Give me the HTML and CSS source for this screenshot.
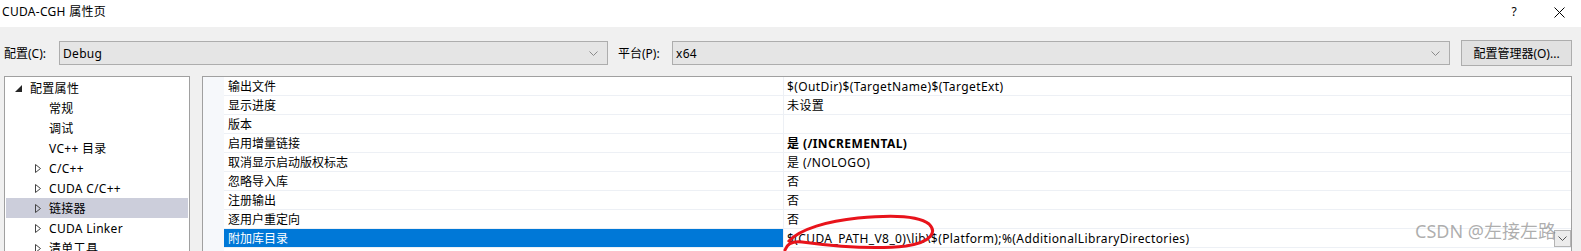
FILE: index.html
```html
<!DOCTYPE html>
<html>
<head>
    <title>CUDA-CGH 属性页</title>
    <link rel="stylesheet" href="styles.css">
</head>
<body>
    <div class="titlebar">
        <span class="title">CUDA-CGH 属性页</span>
        <span class="title-help">?</span>
        <svg class="title-close" width="11" height="11" viewBox="0 0 11 11">
            <path d="M0.5 0.5 L10.5 10.5 M10.5 0.5 L0.5 10.5" stroke="#000" stroke-width="1" fill="none"/>
        </svg>
    </div>

    <div class="toolbar">
        <span class="field-label">配置(C):</span>
        <div class="combo combo-config">
            <span>Debug</span>
            <svg class="chevron" width="9" height="5" viewBox="0 0 9 5"><path d="M0.5 0.5 L4.5 4.5 L8.5 0.5" stroke="#8a8a8a" fill="none"/></svg>
        </div>
        <span class="field-label platform-label">平台(P):</span>
        <div class="combo combo-platform">
            <span>x64</span>
            <svg class="chevron" width="9" height="5" viewBox="0 0 9 5"><path d="M0.5 0.5 L4.5 4.5 L8.5 0.5" stroke="#8a8a8a" fill="none"/></svg>
        </div>
        <button class="btn">配置管理器(O)...</button>
    </div>

    <div class="main">
        <div class="tree">
            <div class="tree-row level0">
                <span class="twisty"><svg width="7" height="7" viewBox="0 0 7 7"><path d="M7 0 L7 7 L0 7 Z" fill="#262626"/></svg></span>
                <span>配置属性</span>
            </div>
            <div class="tree-row leaf">常规</div>
            <div class="tree-row leaf">调试</div>
            <div class="tree-row leaf">VC++ 目录</div>
            <div class="tree-row level1">
                <span class="twisty"><svg width="6" height="9" viewBox="0 0 6 9"><path d="M0.5 0.5 L5.5 4.5 L0.5 8.5 Z" stroke="#444" fill="none"/></svg></span>
                <span>C/C++</span>
            </div>
            <div class="tree-row level1">
                <span class="twisty"><svg width="6" height="9" viewBox="0 0 6 9"><path d="M0.5 0.5 L5.5 4.5 L0.5 8.5 Z" stroke="#444" fill="none"/></svg></span>
                <span>CUDA C/C++</span>
            </div>
            <div class="tree-row level1 selected">
                <span class="twisty"><svg width="6" height="9" viewBox="0 0 6 9"><path d="M0.5 0.5 L5.5 4.5 L0.5 8.5 Z" stroke="#444" fill="none"/></svg></span>
                <span>链接器</span>
            </div>
            <div class="tree-row level1">
                <span class="twisty"><svg width="6" height="9" viewBox="0 0 6 9"><path d="M0.5 0.5 L5.5 4.5 L0.5 8.5 Z" stroke="#444" fill="none"/></svg></span>
                <span>CUDA Linker</span>
            </div>
            <div class="tree-row level1">
                <span class="twisty"><svg width="6" height="9" viewBox="0 0 6 9"><path d="M0.5 0.5 L5.5 4.5 L0.5 8.5 Z" stroke="#444" fill="none"/></svg></span>
                <span>清单工具</span>
            </div>
        </div>

        <div class="grid">
            <div class="gutter"></div>
            <div class="rows">
                <div class="prop-row"><div class="prop-name">输出文件</div><div class="prop-value">$(OutDir)$(TargetName)$(TargetExt)</div></div>
                <div class="prop-row"><div class="prop-name">显示进度</div><div class="prop-value">未设置</div></div>
                <div class="prop-row"><div class="prop-name">版本</div><div class="prop-value"></div></div>
                <div class="prop-row"><div class="prop-name">启用增量链接</div><div class="prop-value bold">是 (/INCREMENTAL)</div></div>
                <div class="prop-row"><div class="prop-name">取消显示启动版权标志</div><div class="prop-value">是 (/NOLOGO)</div></div>
                <div class="prop-row"><div class="prop-name">忽略导入库</div><div class="prop-value">否</div></div>
                <div class="prop-row"><div class="prop-name">注册输出</div><div class="prop-value">否</div></div>
                <div class="prop-row"><div class="prop-name">逐用户重定向</div><div class="prop-value">否</div></div>
                <div class="prop-row selected">
                    <div class="prop-name">附加库目录</div>
                    <div class="prop-value">
                        <span>$(CUDA_PATH_V8_0)\lib\$(Platform);%(AdditionalLibraryDirectories)</span>
                        <span class="drop-btn"><svg width="9" height="5" viewBox="0 0 9 5"><path d="M0.5 0.5 L4.5 4.5 L8.5 0.5" stroke="#555" fill="none"/></svg></span>
                    </div>
                </div>
                <div class="prop-row"><div class="prop-name"></div><div class="prop-value"></div></div>
            </div>
        </div>
    </div>

    <!-- hand-drawn red mark from the screenshot -->
    <svg class="scribble" width="1581" height="251" viewBox="0 0 1581 251">
        <path d="M789 241 C800 229 828 221 858 218 C888 215 918 215 929 224 C937 232 932 242 906 246 C872 250 832 246 802 242 C793 241 787 244 785 250" stroke="#e8131b" stroke-width="3" fill="none" stroke-linecap="round"/>
    </svg>

    <div class="watermark">CSDN @左接左路</div>
</body>
</html>
```

FILE: styles.css
```css
body {
    margin: 0;
    width: 1581px;
    height: 251px;
    overflow: hidden;
    position: relative;
    background-color: #f0f0f0;
    font-family: "Segoe UI", "Noto Sans", "Noto Sans CJK SC", sans-serif;
    font-size: 12px;
    color: #000;
}
.titlebar {
    height: 27px;
    background-color: #fff;
    display: flex;
    align-items: flex-start;
    padding: 3px 0 0 2px;
    box-sizing: border-box;
    line-height: 18px;
    letter-spacing: 0.3px;
}
.title {
    flex: 1;
}
.title-help {
    margin-right: 37px;
}
.title-close {
    margin-top: 4px;
    margin-right: 16px;
}
.toolbar {
    display: flex;
    align-items: center;
    height: 26px;
    margin-top: 13px;
    padding: 0 9px 0 4px;
}
.field-label {
    width: 55px;
}
.platform-label {
    width: 54px;
    margin-left: 10px;
}
.combo {
    height: 24px;
    box-sizing: border-box;
    border: 1px solid #adadad;
    background-color: #e5e5e5;
    display: flex;
    align-items: center;
    padding: 0 9px 0 3px;
    letter-spacing: 0.3px;
}
.combo span {
    flex: 1;
}
.combo-config {
    width: 549px;
}
.combo-platform {
    flex: 1;
}
.btn {
    margin-left: 11px;
    width: 111px;
    height: 26px;
    border: 1px solid #adadad;
    background-color: #e1e1e1;
    font: inherit;
    padding: 0;
}
.main {
    display: flex;
    margin-top: 10px;
    padding: 0 9px 0 4px;
    height: 200px;
}
.tree {
    width: 186px;
    box-sizing: border-box;
    border: 1px solid #a0a0a0;
    background-color: #fff;
    padding: 1px;
    letter-spacing: 0.3px;
}
.tree-row {
    height: 20px;
    display: flex;
    align-items: center;
    white-space: nowrap;
}
.tree-row.level0 {
    padding-left: 9px;
}
.tree-row.level0 .twisty {
    width: 15px;
}
.tree-row.level1 {
    padding-left: 29px;
}
.tree-row.level1 .twisty {
    width: 14px;
}
.twisty svg {
    display: block;
}
.tree-row.leaf {
    padding-left: 43px;
}
.tree-row.selected {
    background-color: #cccedb;
}
.grid {
    flex: 1;
    margin-left: 12px;
    border: 1px solid #a0a0a0;
    background-color: #fff;
    display: flex;
}
.gutter {
    width: 21px;
    background-color: #f6f8fb;
}
.rows {
    flex: 1;
}
.prop-row {
    display: flex;
    height: 18px;
    border-bottom: 1px solid #edf0f5;
    line-height: 20px;
    white-space: nowrap;
}
.prop-name {
    width: 559px;
    padding-left: 4px;
    box-sizing: border-box;
}
.prop-value {
    flex: 1;
    display: flex;
    border-left: 1px solid #edf0f5;
    padding-left: 3px;
    letter-spacing: 0.4px;
}
.prop-value span {
    flex: 1;
}
.bold {
    font-weight: bold;
}
.prop-row.selected .prop-name {
    background-color: #0078d7;
    color: #fff;
}
.drop-btn {
    flex: none !important;
    width: 15px;
    height: 15px;
    margin-top: 1px;
    border: 1px solid #b4b4b4;
    background-color: #ececec;
    display: flex;
    align-items: center;
    justify-content: center;
}
.scribble {
    position: absolute;
    left: 0;
    top: 0;
    pointer-events: none;
}
.watermark {
    position: absolute;
    left: 1415px;
    top: 219px;
    font-size: 18px;
    line-height: 24px;
    color: rgba(120, 120, 120, 0.6);
    font-family: "Noto Sans", "Noto Sans CJK SC", sans-serif;
}
```
